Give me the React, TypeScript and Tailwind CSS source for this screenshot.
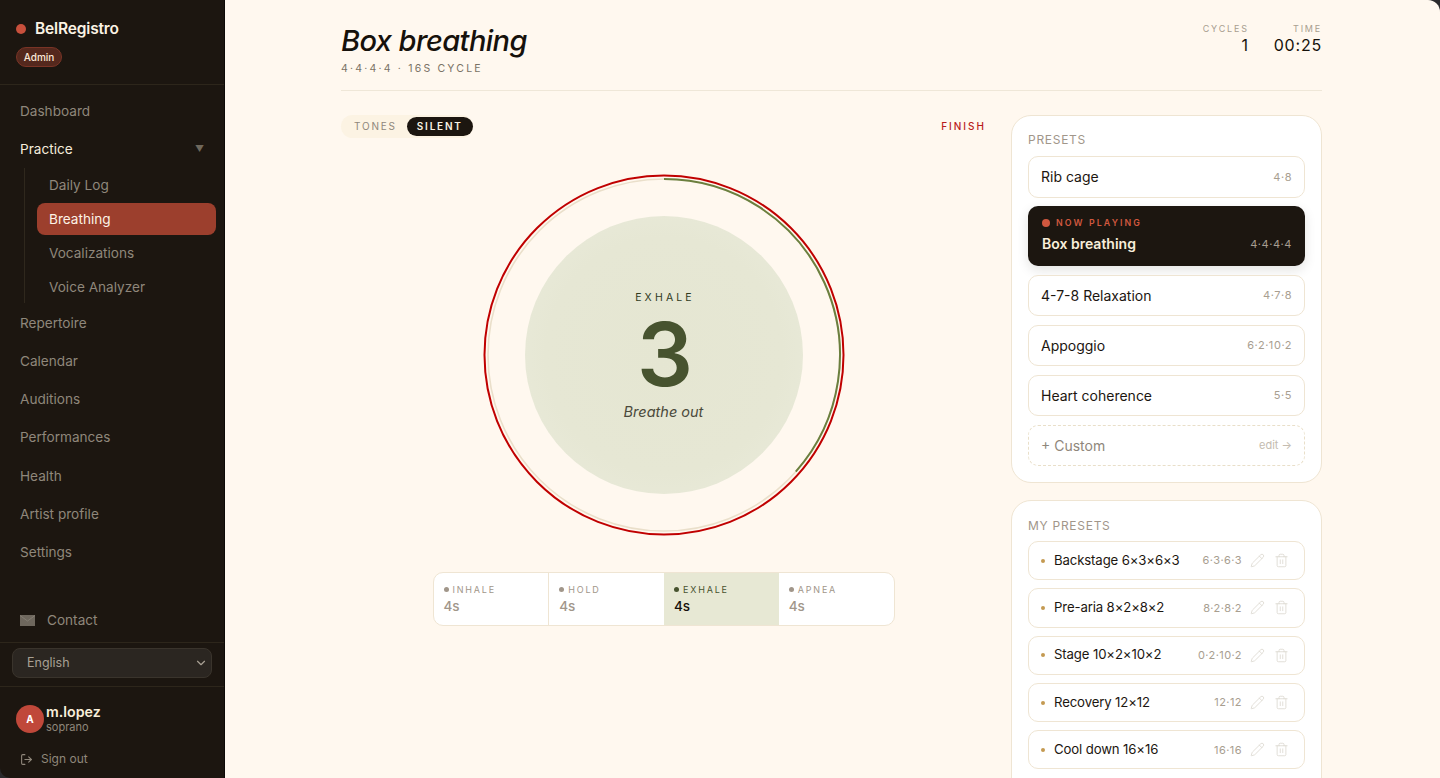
import { ChevronDown, LogOut, Pencil, Trash2 } from "lucide-react";

const navTop = ["Dashboard"];
const subNav = ["Daily Log", "Breathing", "Vocalizations", "Voice Analyzer"];
const navRest = ["Repertoire", "Calendar", "Auditions", "Performances", "Health", "Artist profile", "Settings"];

const phases = [
  { name: "INHALE", active: false },
  { name: "HOLD", active: false },
  { name: "EXHALE", active: true },
  { name: "APNEA", active: false },
];

const myPresets = [
  { name: "Backstage 6×3×6×3", pattern: "6·3·6·3" },
  { name: "Pre-aria 8×2×8×2", pattern: "8·2·8·2" },
  { name: "Stage 10×2×10×2", pattern: "0·2·10·2" },
  { name: "Recovery 12×12", pattern: "12·12" },
  { name: "Cool down 16×16", pattern: "16·16" },
];

function PresetRow({ name, pattern }: { name: string; pattern: string }) {
  return (
    <div className="flex h-[41.5px] items-center justify-between rounded-[10px] border border-[#efe5d3] bg-white pl-[12px] pr-[12px]">
      <span className="text-[14px] text-[#1c1610]">{name}</span>
      <span className="text-[11px] tracking-[0.05em] text-[#a89e90]">{pattern}</span>
    </div>
  );
}

function Sidebar() {
  return (
    <aside className="flex h-full w-[225px] shrink-0 flex-col rounded-bl-[10px] border-r border-r-[#0d0a07] bg-[#1c1610] text-[13.6px] text-[#8f877b]">
      <div className="h-[85px] shrink-0 border-b border-[#2d261b] pl-[16px] pt-[20px]">
        <div className="flex items-center gap-[9px]">
          <span className="h-[10px] w-[10px] rounded-full bg-[#c8503c]" />
          <span className="text-[15.5px] font-semibold leading-[18px] tracking-[-0.01em] text-[#fbf3e4]">BelRegistro</span>
        </div>
        <span className="mt-[9px] inline-flex h-[20px] w-[46px] items-center justify-center rounded-full border border-[#7a3426] bg-[#54281d] text-[10px] font-medium text-[#fbe9d8]">
          Admin
        </span>
      </div>

      <nav className="flex flex-1 flex-col pt-[7px]">
        {navTop.map((item) => (
          <div key={item} className="flex h-[38px] items-center pl-[20px]">
            {item}
          </div>
        ))}
        <div className="flex h-[38px] items-center justify-between pl-[20px] pr-[20px] text-[#f5ecdc]">
          <span>Practice</span>
          <span className="text-[9px] text-[#6f685c]">▼</span>
        </div>
        <div className="ml-[24px] mr-[8px] flex h-[135px] flex-col border-l border-[#2f281d]">
          {subNav.map((item) =>
            item === "Breathing" ? (
              <div key={item} className="my-[1px] ml-[12px] flex h-[32px] shrink-0 items-center rounded-[8px] bg-[#9c3f2d] pl-[12px] text-[#fdf3e6]">
                {item}
              </div>
            ) : (
              <div key={item} className="ml-[12px] flex h-[34px] shrink-0 items-center pl-[12px]">
                {item}
              </div>
            )
          )}
        </div>
        <div className="mt-[1px]">
          {navRest.map((item) => (
            <div key={item} className="flex h-[38.2px] items-center pl-[20px]">
              {item}
            </div>
          ))}
        </div>
      </nav>

      <div className="flex h-[43px] shrink-0 items-center gap-[12px] border-b border-[#2d261b] pl-[20px] pb-[1px]">
        <svg width="15" height="11" viewBox="0 0 15 11">
          <rect width="15" height="11" fill="#6e675d" />
          <path d="M0 0.5 L7.5 6 L15 0.5" fill="none" stroke="#8a8378" strokeWidth="0.8" />
        </svg>
        <span>Contact</span>
      </div>

      <div className="h-[44px] shrink-0 border-b border-[#2d261b] px-[12px] pt-[5px]">
        <div className="relative h-[30px] rounded-[8px] border border-[#3a342c] bg-[#2b2621]">
          <select className="h-full w-full appearance-none bg-transparent pl-[14px] text-[12.5px] text-[#a8a094] outline-none">
            <option>English</option>
          </select>
          <ChevronDown className="absolute right-[3px] top-[7px] h-[14px] w-[14px] text-[#a8a094]" />
        </div>
      </div>

      <div className="h-[91px] shrink-0 pl-[16px] pt-[17px]">
        <div className="flex items-center gap-[2px]">
          <span className="flex h-[28px] w-[28px] items-center justify-center rounded-full bg-[#c0483a] text-[10px] font-bold text-white">A</span>
          <div className="-mt-[1px] flex flex-col">
            <span className="text-[14.2px] font-semibold leading-[17px] text-[#f8eeda]">m.lopez</span>
            <span className="mt-[1px] text-[11px] leading-[13px] text-[#8f877b]">soprano</span>
          </div>
        </div>
        <div className="mt-[16px] flex items-center gap-[8px] pl-[4px] text-[12px] text-[#8f877b]">
          <LogOut className="h-[13px] w-[13px]" />
          <span>Sign out</span>
        </div>
      </div>
    </aside>
  );
}

function BreathRing() {
  return (
    <div className="relative mt-[36px] flex h-[362px] w-[362px] items-center justify-center">
      <svg className="absolute inset-0" width="362" height="362" viewBox="0 0 362 362">
        <circle cx="181" cy="181" r="179.5" fill="none" stroke="#c00000" strokeWidth="2" />
        <circle cx="181" cy="181" r="176" fill="none" stroke="#eadfca" strokeWidth="1.6" />
        <path
          d="M181 5 A176 176 0 0 1 312.8 297.6"
          fill="none"
          stroke="#6b7f3e"
          strokeWidth="2"
        />
      </svg>
      <div className="flex h-[278px] w-[278px] flex-col items-center rounded-full bg-[radial-gradient(circle,#e5e6d2_0%,#e6e7d4_60%,#ebecdd_100%)] pt-[76px]">
        <span className="pl-[3px] text-[10.5px] leading-[12px] tracking-[0.3em] text-[#2f3a1e]">EXHALE</span>
        <span className="mt-[15px] pl-[3px] text-[88px] font-semibold leading-[70px] text-[#47532f]">3</span>
        <span className="mt-[13.5px] text-[14.5px] italic leading-[18px] text-[#4b4a3c]">Breathe out</span>
      </div>
    </div>
  );
}

export default function App() {
  return (
    <div className="flex h-[778px] w-[1440px] overflow-hidden bg-[#2a2a2c] font-['Inter',sans-serif]">
      <Sidebar />
      <main className="flex-1 overflow-hidden rounded-tr-[12px] bg-[#fff8ef] pl-[116px] pr-[118px]">
        <header className="flex h-[91px] items-start justify-between border-b border-[#efe7d8] pt-[23px]">
          <div>
            <h1 className="text-[29px] font-medium italic leading-[36px] tracking-[-0.02em] text-[#16110b]">Box breathing</h1>
            <p className="mt-[3px] text-[10.5px] leading-[14px] tracking-[0.21em] text-[#7a7265]">4·4·4·4 · 16S CYCLE</p>
          </div>
          <div className="flex gap-[25px] text-right">
            <div>
              <div className="text-[9px] leading-[11px] tracking-[0.2em] text-[#a89e90]">CYCLES</div>
              <div className="mt-[1px] text-[16px] leading-[20px] tracking-[0.05em] text-[#16110b]">1</div>
            </div>
            <div>
              <div className="text-[9px] leading-[11px] tracking-[0.2em] text-[#a89e90]">TIME</div>
              <div className="mt-[1px] text-[16px] leading-[20px] tracking-[0.05em] text-[#16110b]">00:25</div>
            </div>
          </div>
        </header>

        <div className="mt-[24px] flex gap-[25px]">
          <section className="flex w-[645px] shrink-0 flex-col items-center">
            <div className="flex w-full items-center justify-between">
              <div className="flex h-[23px] items-center rounded-full bg-[#fcf3e3] pl-[13px] pr-0 text-[10px] tracking-[0.18em]">
                <span className="mr-[10px] text-[#8f877b]">TONES</span>
                <span className="flex h-[19px] w-[66px] items-center justify-center rounded-full bg-[#1c1610] font-semibold text-[#fbf3e4]">SILENT</span>
              </div>
              <span className="text-[10px] font-medium tracking-[0.2em] text-[#b91c1c]">FINISH</span>
            </div>

            <BreathRing />

            <div className="mt-[36px] flex h-[54px] w-[462px] overflow-hidden rounded-[10px] border border-[#efe5d3] bg-white">
              {phases.map((phase, i) => (
                <div
                  key={phase.name}
                  className={`flex-1 pl-[10px] pt-[11px] ${i === 0 ? "border-r border-[#efe5d3]" : ""} ${phase.active ? "bg-[#e7e8d4]" : ""}`}
                >
                  <div className="flex items-center gap-[4px]">
                    <span className={`h-[5px] w-[5px] rounded-full ${phase.active ? "bg-[#47532f]" : "bg-[#a1968a]"}`} />
                    <span className={`text-[9px] leading-[11px] tracking-[0.2em] ${phase.active ? "text-[#47532f]" : "text-[#a1968a]"}`}>{phase.name}</span>
                  </div>
                  <div className={`mt-[2px] text-[13.5px] font-medium leading-[18px] ${phase.active ? "text-[#16110b]" : "text-[#a1968a]"}`}>4s</div>
                </div>
              ))}
            </div>
          </section>

          <section className="flex w-[311px] shrink-0 flex-col gap-[17px]">
            <div className="rounded-[20px] border border-[#efe5d3] bg-white px-[16px] pb-[16px] pt-[16px]">
              <h2 className="mb-[9px] text-[12px] leading-[15px] tracking-[0.06em] text-[#a1968a]">PRESETS</h2>
              <div className="flex flex-col gap-[8.5px]">
                <PresetRow name="Rib cage" pattern="4·8" />
                <div className="flex h-[60px] flex-col justify-center rounded-[10px] bg-[#1c1610] pb-[2px] pl-[14px] pr-[13px] shadow-[0_4px_12px_rgba(28,22,16,0.12)]">
                  <div className="flex items-center gap-[6px]">
                    <span className="h-[8px] w-[8px] rounded-full bg-[#d0583f]" />
                    <span className="text-[8.8px] font-semibold leading-[12px] tracking-[0.24em] text-[#d0583f]">NOW PLAYING</span>
                  </div>
                  <div className="mt-[6px] flex items-center justify-between">
                    <span className="text-[14px] font-semibold leading-[18px] text-[#f8eeda]">Box breathing</span>
                    <span className="text-[11px] tracking-[0.05em] text-[#a89e90]">4·4·4·4</span>
                  </div>
                </div>
                <PresetRow name="4-7-8 Relaxation" pattern="4·7·8" />
                <PresetRow name="Appoggio" pattern="6·2·10·2" />
                <PresetRow name="Heart coherence" pattern="5·5" />
                <div className="flex h-[41.5px] items-center justify-between rounded-[10px] border border-dashed border-[#e9dfc9] pl-[12px] pr-[12px]">
                  <span className="text-[14px] text-[#8f877b]">+ Custom</span>
                  <span className="text-[11px] text-[#c4bcb0]">edit →</span>
                </div>
              </div>
            </div>

            <div className="rounded-t-[20px] border border-[#efe5d3] bg-white px-[16px] pb-[16px] pt-[17px]">
              <h2 className="mb-[8px] text-[12px] leading-[15px] tracking-[0.06em] text-[#a1968a]">MY PRESETS</h2>
              <div className="flex flex-col gap-[8px]">
                {myPresets.map((preset) => (
                  <div key={preset.name} className="flex h-[39.3px] items-center rounded-[10px] border border-[#efe5d3] bg-white pl-[12px] pr-[15.5px]">
                    <span className="h-[4px] w-[4px] shrink-0 rounded-full bg-[#c49a52]" />
                    <span className="ml-[9px] flex-1 text-[13.2px] tracking-[-0.01em] text-[#1c1610]">{preset.name}</span>
                    <span className="text-[11px] tracking-[0.04em] text-[#a89e90]">{preset.pattern}</span>
                    <Pencil className="ml-[7.5px] h-[15px] w-[15px] text-[#dad6cd]" strokeWidth={1.25} />
                    <Trash2 className="ml-[9px] h-[15px] w-[15px] text-[#dad6cd]" strokeWidth={1.25} />
                  </div>
                ))}
              </div>
            </div>
          </section>
        </div>
      </main>
    </div>
  );
}
